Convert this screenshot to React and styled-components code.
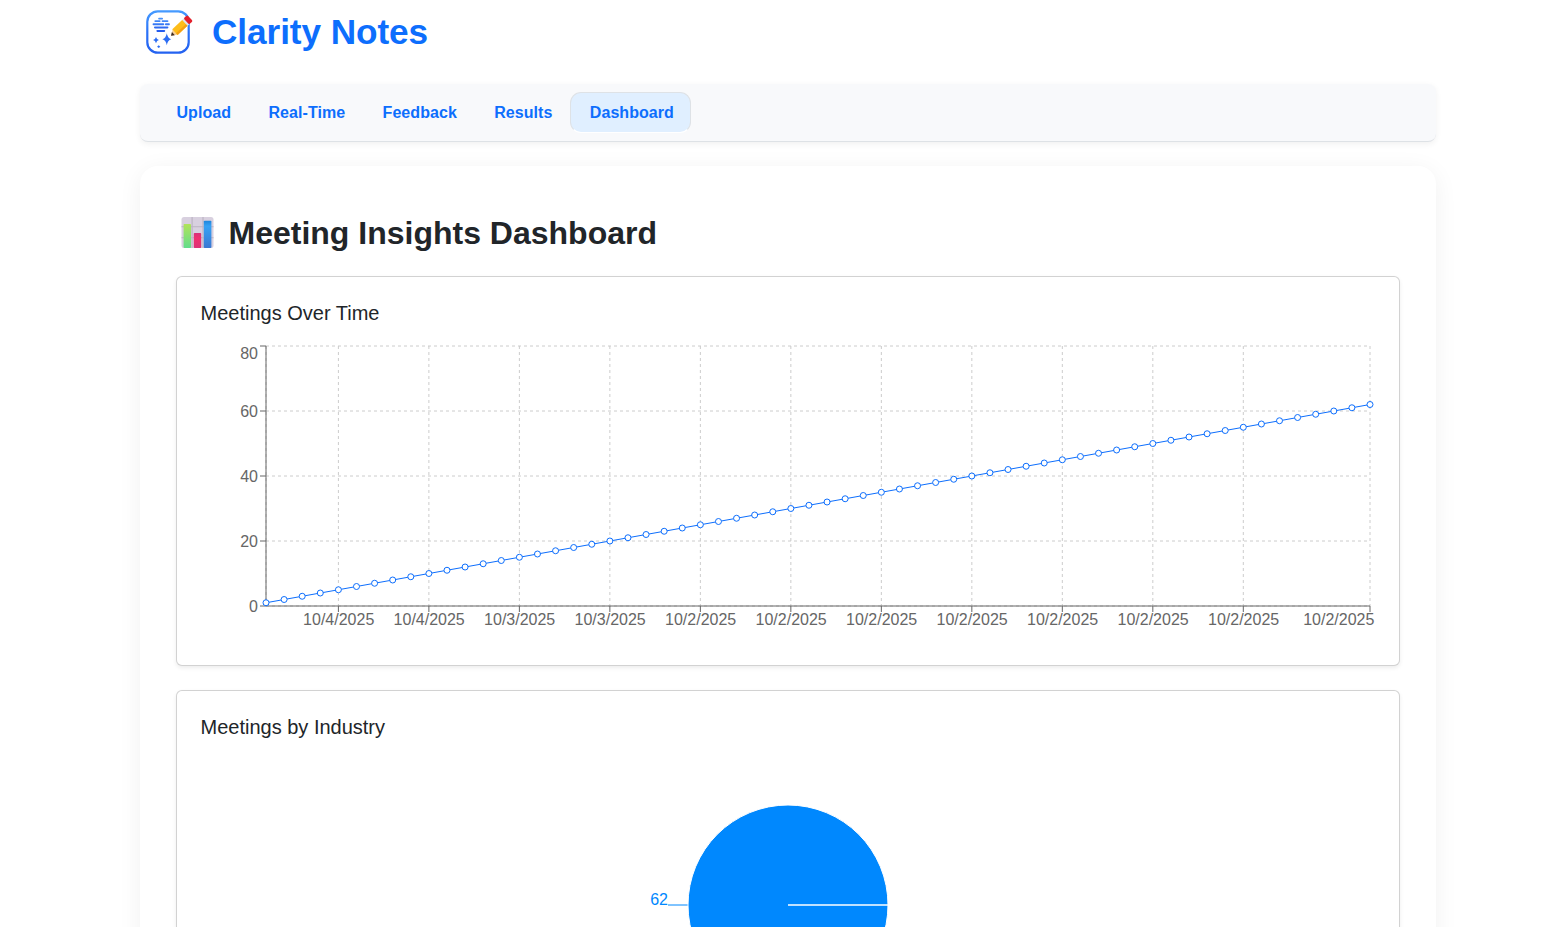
import React from "react";
import styled, { createGlobalStyle } from "styled-components";

const GlobalStyle = createGlobalStyle`
  *, *::before, *::after { box-sizing: border-box; }
  body {
    margin: 0;
    background: #fff;
    color: #212529;
    font-family: "Liberation Sans", Arial, sans-serif;
    font-size: 16px;
    line-height: 1.5;
  }
`;

const Page = styled.div`
  height: 100vh;
  padding-left: 140px;
  overflow: hidden;
`;

const Container = styled.div`
  width: 1296px;
`;

const Header = styled.header`
  display: flex;
  align-items: center;
  gap: 20px;
  height: 64px;
  padding-left: 6px;
`;

const Brand = styled.h1`
  margin: 0;
  color: #0d6efd;
  font-size: 35.2px;
  font-weight: 700;
  line-height: 42px;
  letter-spacing: -0.08px;
`;

const TabBar = styled.nav`
  display: flex;
  height: 58px;
  margin-top: 20px;
  padding: 8px 16.3px;
  background: #f8f9fb;
  border-bottom: 1px solid #dee2e6;
  border-radius: 8px;
  box-shadow: 0 2px 6px rgba(0, 0, 0, 0.06);
`;

const Tab = styled.a`
  height: 41px;
  padding: 7px 16.2px 7px 19.2px;
  border: 1px solid;
  border-color: ${(p) => (p.$active ? "#dee2e6 #dee2e6 #fff" : "transparent")};
  border-radius: 11px;
  background: ${(p) => (p.$active ? "#e0efff" : "transparent")};
  color: #0d6efd;
  font-weight: 700;
  line-height: 25px;
  letter-spacing: 0.06px;
`;

const Panel = styled.main`
  height: 1100px;
  margin-top: 24px;
  padding: 48px 36px 36px;
  background: #fff;
  border-radius: 18px;
  box-shadow: 0 4px 24px rgba(0, 0, 0, 0.06);
`;

const PanelHeading = styled.h2`
  display: flex;
  align-items: center;
  gap: 15px;
  margin: 0 0 24px;
  padding-left: 4.5px;
  height: 38px;
  font-size: 32px;
  font-weight: 700;
  line-height: 38px;
`;

const Card = styled.section`
  height: 390px;
  margin-bottom: 24px;
  padding: 24px;
  background: #fff;
  border: 1px solid rgba(0, 0, 0, 0.175);
  border-radius: 6px;
  box-shadow: 0 2px 4px rgba(0, 0, 0, 0.075);
`;

const CardTitle = styled.h5`
  margin: 0 0 16px -0.5px;
  font-size: 20px;
  font-weight: 400;
  line-height: 24px;
`;

const Chart = styled.svg`
  display: block;
  width: 1174px;
  height: 300px;
  overflow: visible;
  text {
    font-size: 16px;
  }
`;

function Logo() {
  return (
    <svg width="46" height="44" viewBox="0 0 46 44" fill="none" overflow="visible">
      <defs>
        <linearGradient id="frame" x1="0" y1="0" x2="0" y2="1">
          <stop offset="0" stopColor="#459aff" />
          <stop offset="0.5" stopColor="#2b72f8" />
          <stop offset="1" stopColor="#2462f0" />
        </linearGradient>
        <linearGradient id="lines" x1="0" y1="8" x2="0" y2="22" gradientUnits="userSpaceOnUse">
          <stop offset="0" stopColor="#4a94fa" />
          <stop offset="1" stopColor="#2158ee" />
        </linearGradient>
      </defs>
      <rect x="1.3" y="1.3" width="41.4" height="41.4" rx="10.5" stroke="url(#frame)" strokeWidth="2.2" />
      <g fill="url(#lines)">
        <rect x="12.2" y="7.8" width="4.8" height="1.7" rx="0.8" />
        <rect x="8.4" y="10.3" width="6.2" height="1.8" rx="0.8" />
        <rect x="15.6" y="10.3" width="6.8" height="1.8" rx="0.8" />
        <rect x="6.6" y="13.3" width="11.6" height="1.9" rx="0.8" />
        <rect x="19" y="13.3" width="4.8" height="1.9" rx="0.8" />
        <rect x="8" y="16.5" width="14.4" height="1.9" rx="0.8" />
        <rect x="10.4" y="20" width="8.8" height="1.9" rx="0.8" />
      </g>
      <g fill="#2c6df3">
        <path d="M20.8 23.3Q21.6 28.2 25.2 29.3Q21.6 30.2 20.8 35.2Q20 30.2 16.4 29.3Q20 28.2 20.8 23.3Z" />
        <path d="M10 26.9Q10.6 29.4 12.9 30Q10.6 30.6 10 33.3Q9.4 30.6 7.1 30Q9.4 29.4 10 26.9Z" />
        <path d="M12.7 35.3L14.3 36.7L12.7 38.1L11.1 36.7Z" />
      </g>
      <g transform="translate(25 25.8) rotate(-43)">
        <path d="M0 0L6 -3.8V3.8Z" fill="#f8cf94" />
        <path d="M0 0L3.2 -2.1V2.1Z" fill="#3b2926" />
        <rect x="5.4" y="-3.9" width="13.8" height="7.8" fill="#fdbd1a" />
        <rect x="5.4" y="1.6" width="13.8" height="2.3" fill="#f5a012" />
        <rect x="19" y="-4" width="2.2" height="8" fill="#dde2ee" />
        <rect x="21" y="-4.1" width="5" height="8.2" rx="1.3" fill="#e3202b" />
      </g>
    </svg>
  );
}

function BarsIcon() {
  return (
    <svg width="33" height="32" viewBox="0 0 33 32">
      <defs>
        <linearGradient id="green" x1="0" y1="0" x2="0" y2="1">
          <stop offset="0" stopColor="#b1e35a" />
          <stop offset="1" stopColor="#62dd8c" />
        </linearGradient>
        <linearGradient id="pink" x1="0" y1="0" x2="0" y2="1">
          <stop offset="0" stopColor="#d8307a" />
          <stop offset="0.35" stopColor="#f0306e" />
          <stop offset="1" stopColor="#dc3278" />
        </linearGradient>
        <linearGradient id="blue" x1="0" y1="0" x2="0" y2="1">
          <stop offset="0" stopColor="#1f86dc" />
          <stop offset="0.2" stopColor="#36a2f5" />
          <stop offset="1" stopColor="#3b78d2" />
        </linearGradient>
      </defs>
      <rect x="0.5" y="0" width="32" height="31" rx="2.5" fill="#d8d0df" />
      <path d="M0.5 9.7H32.5M0.5 20.8H32.5M11.1 0V31M22 0V31" stroke="#bbb3c2" strokeWidth="1.1" />
      <rect x="2.6" y="7" width="7.4" height="24" rx="0.8" fill="url(#green)" />
      <rect x="12.8" y="16" width="7.4" height="15" rx="0.8" fill="url(#pink)" />
      <rect x="22.8" y="3.8" width="7.6" height="27.2" rx="0.8" fill="url(#blue)" />
    </svg>
  );
}

const PLOT = { left: 65, right: 1169, top: 5, bottom: 265 };
const POINTS = Array.from({ length: 62 }, (_, i) => ({
  x: PLOT.left + ((PLOT.right - PLOT.left) * i) / 61,
  y: PLOT.bottom - (i + 1) * 3.25,
}));
const DATES = [
  [4, "10/4/2025"],
  [9, "10/4/2025"],
  [14, "10/3/2025"],
  [19, "10/3/2025"],
  [24, "10/2/2025"],
  [29, "10/2/2025"],
  [34, "10/2/2025"],
  [39, "10/2/2025"],
  [44, "10/2/2025"],
  [49, "10/2/2025"],
  [54, "10/2/2025"],
  [61, "10/2/2025"],
];

function MeetingsOverTime() {
  return (
    <Chart viewBox="0 0 1174 300">
      <g stroke="#ccc" strokeDasharray="3 3">
        {[0, 20, 40, 60, 80].map((v) => (
          <line key={v} x1={PLOT.left} x2={PLOT.right} y1={PLOT.bottom - v * 3.25} y2={PLOT.bottom - v * 3.25} />
        ))}
        {DATES.map(([i]) => (
          <line key={i} x1={POINTS[i].x} x2={POINTS[i].x} y1={PLOT.top} y2={PLOT.bottom} />
        ))}
        <line x1={PLOT.left} x2={PLOT.left} y1={PLOT.top} y2={PLOT.bottom} />
      </g>
      <g stroke="#666">
        <line x1={PLOT.left} x2={PLOT.right} y1={PLOT.bottom} y2={PLOT.bottom} />
        <line x1={PLOT.left} x2={PLOT.left} y1={PLOT.top} y2={PLOT.bottom} />
        {DATES.map(([i]) => (
          <line key={i} x1={POINTS[i].x} x2={POINTS[i].x} y1={PLOT.bottom} y2={PLOT.bottom + 6} />
        ))}
        {[0, 20, 40, 60, 80].map((v) => (
          <line key={v} x1={PLOT.left - 6} x2={PLOT.left} y1={PLOT.bottom - v * 3.25} y2={PLOT.bottom - v * 3.25} />
        ))}
      </g>
      <g fill="#666">
        {DATES.map(([i, label]) => (
          <text key={i} x={i === 61 ? 1137.8 : POINTS[i].x + 0.3} y="284" textAnchor="middle">
            {label}
          </text>
        ))}
        {[0, 20, 40, 60, 80].map((v) => (
          <text key={v} x="57" y={v === 80 ? 18 : PLOT.bottom - v * 3.25 + 5.7} textAnchor="end">
            {v}
          </text>
        ))}
      </g>
      <polyline points={POINTS.map((p) => `${p.x},${p.y}`).join(" ")} fill="none" stroke="#0d6efd" />
      <g fill="#fff" stroke="#0d6efd">
        {POINTS.map((p) => (
          <circle key={p.x} cx={p.x} cy={p.y} r="3" />
        ))}
      </g>
    </Chart>
  );
}

function MeetingsByIndustry() {
  return (
    <Chart viewBox="0 0 1174 300">
      <line x1="487" x2="467" y1="150" y2="150" stroke="#0088fe" />
      <circle cx="587" cy="150" r="100" fill="#0088fe" stroke="#fff" />
      <line x1="587" x2="687" y1="150" y2="150" stroke="#fff" strokeWidth="1.5" />
      <text x="467" y="150" textAnchor="end" fill="#0088fe">
        62
      </text>
    </Chart>
  );
}

const TABS = ["Upload", "Real-Time", "Feedback", "Results", "Dashboard"];

export default function App() {
  return (
    <>
      <GlobalStyle />
      <Page>
        <Container>
          <Header>
            <Logo />
            <Brand>Clarity Notes</Brand>
          </Header>
          <TabBar>
            {TABS.map((name) => (
              <Tab key={name} $active={name === "Dashboard"}>
                {name}
              </Tab>
            ))}
          </TabBar>
          <Panel>
            <PanelHeading>
              <BarsIcon />
              <span>Meeting Insights Dashboard</span>
            </PanelHeading>
            <Card>
              <CardTitle>Meetings Over Time</CardTitle>
              <MeetingsOverTime />
            </Card>
            <Card>
              <CardTitle>Meetings by Industry</CardTitle>
              <MeetingsByIndustry />
            </Card>
          </Panel>
        </Container>
      </Page>
    </>
  );
}
